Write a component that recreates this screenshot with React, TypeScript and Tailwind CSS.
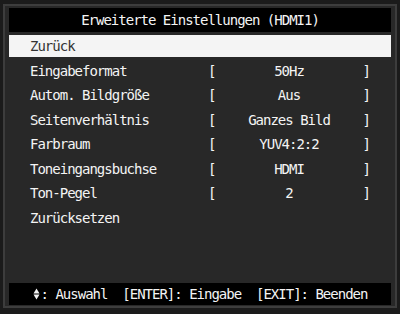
const rows = [
	{ label: "Eingabeformat", value: "50Hz" },
	{ label: "Autom. Bildgröße", value: "Aus" },
	{ label: "Seitenverhältnis", value: "Ganzes Bild" },
	{ label: "Farbraum", value: "YUV4:2:2" },
	{ label: "Toneingangsbuchse", value: "HDMI" },
	{ label: "Ton-Pegel", value: "2" },
];

function UpDown() {
	return (
		<svg width="7" height="12" viewBox="0 0 7 12" className="inline-block mr-[1px]">
			<path d="M3.5 0.5 L6.5 5.4 L0.5 5.4 Z" fill="#f2f2f2" />
			<path d="M0.5 6.6 L6.5 6.6 L3.5 11.5 Z" fill="#f2f2f2" />
		</svg>
	);
}

export default function App() {
	return (
		<div className="w-[400px] h-[314px] bg-[#1b1b1b] pt-[4px] px-[3px] pb-[6px] font-['DejaVu_Sans_Mono',monospace] text-[14px] tracking-[-1px] text-[#f4f4f4]">
			<div className="h-full border-2 border-[#3d3d3d] bg-[#282828] px-[4px] pt-[2px] flex flex-col">
				<div className="h-[24px] bg-black flex items-center justify-center">
					Erweiterte Einstellungen (HDMI1)
				</div>
				<div className="mt-[3px] h-[22px] bg-[#f4f4f4] text-[#333] flex items-center px-[21px]">
					Zurück
				</div>
				<div className="pt-[1.75px] flex flex-col">
					{rows.map((r) => (
						<div key={r.label} className="h-[24.5px] flex items-center px-[21px]">
							<span className="w-[178px]">{r.label}</span>
							<span className="w-[7.4px]">[</span>
							<span className="flex-1 text-center">{r.value}</span>
							<span className="w-[7.4px]">]</span>
						</div>
					))}
					<div className="h-[24.5px] flex items-center px-[21px]">Zurücksetzen</div>
				</div>
				<div className="mt-auto mb-[1px] h-[22px] bg-black flex items-center justify-center whitespace-pre">
					<UpDown />
					{": Auswahl  [ENTER]: Eingabe  [EXIT]: Beenden"}
				</div>
			</div>
		</div>
	);
}
